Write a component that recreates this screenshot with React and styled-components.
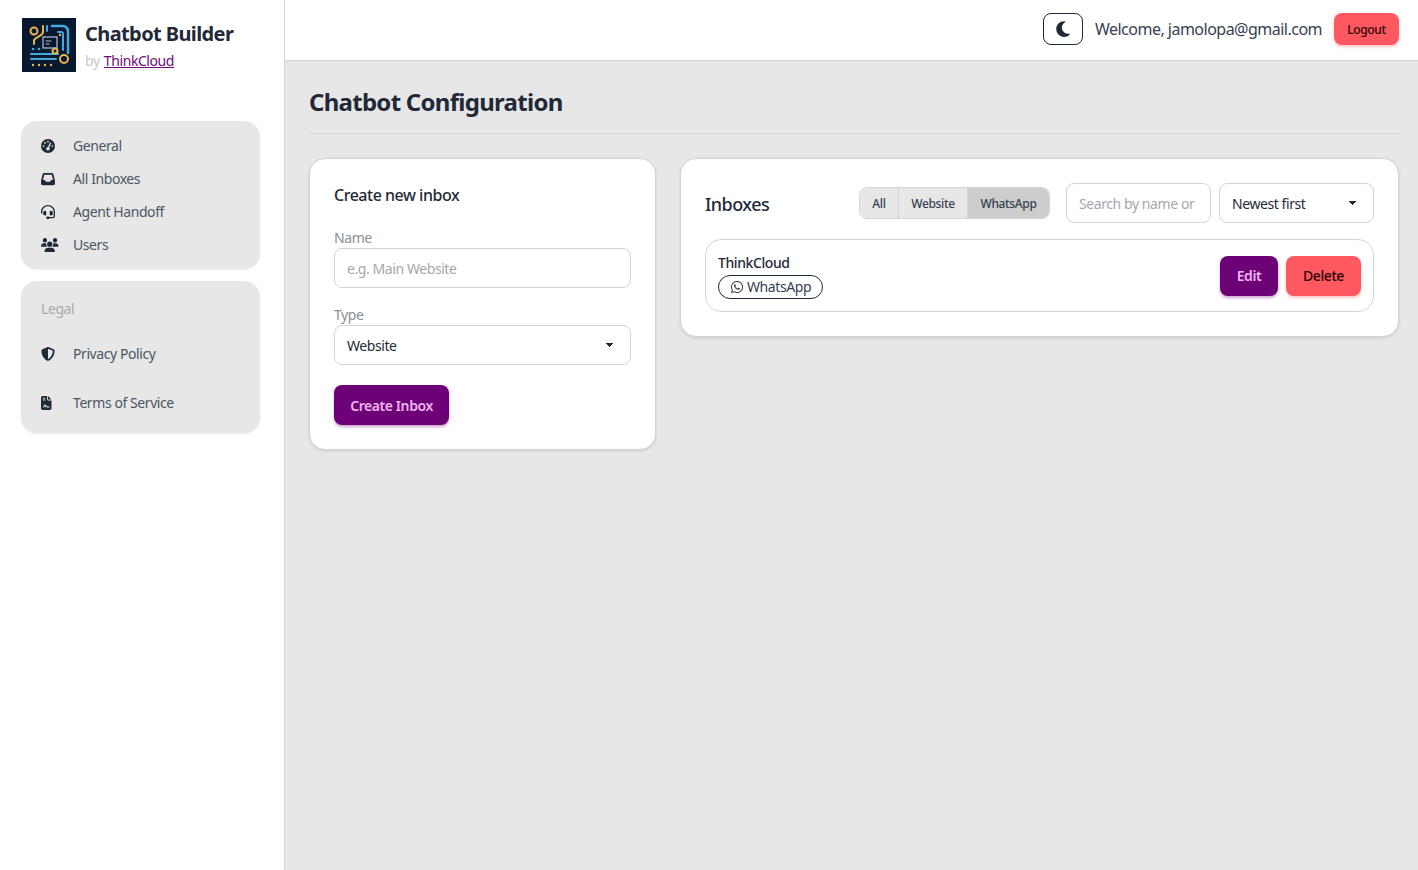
import React from "react";
import styled, { createGlobalStyle } from "styled-components";
import {
  FaGaugeHigh,
  FaInbox,
  FaHeadset,
  FaUsers,
  FaShieldHalved,
  FaFileContract,
  FaMoon,
  FaWhatsapp,
} from "react-icons/fa6";

const GlobalStyle = createGlobalStyle`
  * { box-sizing: border-box; letter-spacing: -0.03em; }
  html, body { margin: 0; height: 100%; }
  body {
    font-family: "Noto Sans", "Open Sans", sans-serif;
    color: #1f2937;
    background: #fff;
  }
`;

const Page = styled.div`
  display: flex;
  height: 870px;
  overflow: hidden;
`;

const Sidebar = styled.aside`
  width: 285px;
  flex: none;
  background: #fff;
  border-right: 1px solid #d4d4d4;
  padding: 18px 24px 0 21px;
`;

const Brand = styled.div`
  display: flex;
  gap: 9px;
  margin-bottom: 49px;
  margin-left: 1px;
`;

const BrandText = styled.div`
  display: flex;
  flex-direction: column;
`;

const BrandName = styled.div`
  font-size: 20px;
  font-weight: 700;
  line-height: 32px;
  color: #1f2937;
`;

const BrandBy = styled.div`
  font-size: 14px;
  line-height: 22px;
  color: #c9c9c9;
`;

const BrandLink = styled.a`
  color: #6f0a78;
  text-decoration: underline;
  margin-left: 1px;
`;

const NavPanel = styled.nav`
  background: #e7e7e7;
  border-radius: 16px;
  padding: ${(props) => props.$padding};
  margin-bottom: 12px;
  box-shadow: 0 1px 2px rgba(0, 0, 0, 0.08);
`;

const NavHeading = styled.div`
  font-size: 14px;
  line-height: 20px;
  color: #a9a9a9;
  margin-bottom: 10px;
  padding-left: 20px;
`;

const NavItem = styled.a`
  display: flex;
  align-items: center;
  height: ${(props) => props.$height}px;
  padding-left: 20px;
  font-size: 14px;
  color: #4b5563;
`;

const NavIcon = styled.span`
  display: flex;
  width: 32px;
  color: #1f2937;
  svg {
    width: ${(props) => props.$iconWidth}px;
    height: 14px;
  }
`;

const Content = styled.div`
  flex: 1;
  display: flex;
  flex-direction: column;
  min-width: 0;
`;

const Topbar = styled.header`
  height: 61px;
  flex: none;
  background: #fff;
  border-bottom: 1px solid #d4d4d4;
  display: flex;
  align-items: center;
  justify-content: flex-end;
  padding: 0 19px 2px 0;
`;

const ThemeButton = styled.button`
  width: 40px;
  height: 32px;
  border: 1px solid #1f2937;
  border-radius: 8px;
  background: #fff;
  color: #1f2937;
  font-size: 18px;
  display: flex;
  align-items: center;
  justify-content: center;
  padding: 0;
  margin-right: 12px;
`;

const Welcome = styled.span`
  font-size: 16px;
  letter-spacing: -0.032em;
  color: #374151;
  margin-right: 12px;
`;

const RedButton = styled.button`
  border: none;
  background: #ff5861;
  color: #2b0507;
  font-family: inherit;
  font-weight: 500;
  font-size: ${(props) => (props.$small ? "12px" : "14px")};
  height: ${(props) => (props.$small ? "32px" : "40px")};
  width: ${(props) => (props.$small ? "65px" : "75px")};
  padding: 0;
  border-radius: 8px;
  box-shadow: 0 2px 3px rgba(255, 88, 97, 0.35);
`;

const PurpleButton = styled.button`
  border: none;
  background: #6d0076;
  color: #f0b6f0;
  font-family: inherit;
  font-weight: 600;
  font-size: 14px;
  height: 40px;
  width: ${(props) => props.$width}px;
  padding: 0;
  border-radius: 8px;
  box-shadow: 0 2px 3px rgba(109, 0, 118, 0.35);
`;

const Main = styled.main`
  flex: 1;
  background: #e7e7e7;
  padding: 21px 18px 0 24px;
`;

const PageTitle = styled.h1`
  margin: 0;
  font-size: 24px;
  font-weight: 700;
  line-height: 40px;
  color: #1f2937;
  padding-bottom: 11px;
  border-bottom: 1px solid #d4d4d4;
  margin-bottom: 24px;
`;

const Columns = styled.div`
  display: grid;
  grid-template-columns: 347px 719px;
  gap: 24px;
  align-items: start;
`;

const Card = styled.section`
  background: #fff;
  border: 1px solid #d4d4d4;
  border-radius: 16px;
  padding: 24px;
  box-shadow: 0 1px 3px rgba(0, 0, 0, 0.12);
`;

const CardTitle = styled.h2`
  margin: 0 0 20px;
  font-size: 16px;
  font-weight: 500;
  line-height: 25px;
  color: #1f2937;
`;

const FieldLabel = styled.label`
  display: block;
  font-size: 14px;
  line-height: 20px;
  color: #8b8f96;
`;

const Input = styled.input`
  display: block;
  width: ${(props) => props.$width || "100%"};
  flex: none;
  height: 40px;
  border: 1px solid #d4d4d4;
  border-radius: 8px;
  background: #fff;
  padding: 0 12px;
  font-family: inherit;
  font-size: 14px;
  color: #1f2937;
  outline: none;
  &::placeholder {
    color: #a3a7ad;
    opacity: 1;
  }
`;

const Select = styled.select`
  display: block;
  appearance: none;
  width: ${(props) => props.$width || "100%"};
  flex: none;
  height: 40px;
  border: 1px solid #d4d4d4;
  border-radius: 8px;
  padding: 0 12px;
  font-family: inherit;
  font-size: 14px;
  color: #1f2937;
  outline: none;
  background-color: #fff;
  background-image: linear-gradient(45deg, transparent 50%, #1f2937 50%),
    linear-gradient(135deg, #1f2937 50%, transparent 50%);
  background-size: 4px 4px;
  background-repeat: no-repeat;
  background-position: calc(100% - 20px) 17px, calc(100% - 16px) 17px;
`;

const Field = styled.div`
  margin-bottom: ${(props) => props.$gap}px;
`;

const InboxHeader = styled.div`
  display: flex;
  align-items: center;
  margin-bottom: 16px;
`;

const InboxTitle = styled.h2`
  margin: 2px 0 0;
  flex: 1;
  font-size: 18px;
  font-weight: 500;
  color: #1f2937;
`;

const Filters = styled.div`
  display: flex;
  height: 32px;
  margin-right: 16px;
  border: 1px solid #d4d4d4;
  border-radius: 8px;
  overflow: hidden;
`;

const FilterTab = styled.button`
  border: none;
  border-left: ${(props) => (props.$first ? "none" : "1px solid #d4d4d4")};
  background: ${(props) => (props.$active ? "#cdcdcd" : "#e7e7e7")};
  color: #374151;
  font-family: inherit;
  font-size: 12px;
  font-weight: 500;
  width: ${(props) => props.$width}px;
  padding: 0;
`;

const SearchGroup = styled.div`
  display: flex;
  gap: 8px;
`;

const InboxRow = styled.div`
  display: flex;
  align-items: center;
  justify-content: space-between;
  border: 1px solid #d4d4d4;
  border-radius: 16px;
  padding: 12px;
  height: 73px;
`;

const InboxInfo = styled.div`
  display: flex;
  flex-direction: column;
  align-items: flex-start;
`;

const InboxName = styled.div`
  font-size: 14px;
  font-weight: 500;
  line-height: 20px;
  margin-bottom: 2px;
  color: #1f2937;
`;

const TypeBadge = styled.span`
  display: inline-flex;
  align-items: center;
  gap: 3px;
  height: 24px;
  padding: 0 11px;
  border: 1px solid #1f2937;
  border-radius: 12px;
  font-size: 14px;
  color: #374151;
`;

const RowActions = styled.div`
  display: flex;
  gap: 8px;
`;

const Logo = () => (
  <svg width="54" height="54" viewBox="0 0 54 54" style={{ flex: "none" }}>
    <rect width="54" height="54" fill="#07182f" />
    <g fill="none" strokeWidth="2" strokeLinecap="round">
      <circle cx="12" cy="13" r="3.5" stroke="#e8b64a" />
      <path d="M21 8v6c0 4-6 4-9 8v4" stroke="#e8b64a" />
      <path d="M25 8v5" stroke="#3fa9e0" />
      <path d="M30 8h10q6 0 6 6v21" stroke="#3fa9e0" strokeWidth="2.5" />
      <path d="M36 14h3q2 0 2 2v16" stroke="#3fa9e0" />
      <path d="M9 36h27M9 41h25" stroke="#3fa9e0" strokeWidth="2" />
      <rect x="21" y="19" width="14" height="11" stroke="#b9c4d0" strokeWidth="1.2" />
      <path d="M24 23h5M24 26h3" stroke="#b9c4d0" strokeWidth="1" />
      <circle cx="33" cy="33" r="2.5" stroke="#e8b64a" />
      <circle cx="42" cy="41" r="4" stroke="#e8b64a" />
    </g>
    <g fill="#e8b64a">
      <circle cx="11" cy="47" r="1.2" />
      <circle cx="17" cy="47" r="1.2" />
      <circle cx="23" cy="47" r="1.2" />
      <circle cx="29" cy="47" r="1.2" />
      <circle cx="38" cy="17" r="1.2" />
    </g>
    <g fill="#3fa9e0">
      <circle cx="11" cy="31" r="1.3" />
      <circle cx="17" cy="31" r="1.3" />
    </g>
  </svg>
);

const mainLinks = [
  { label: "General", icon: <FaGaugeHigh />, iconWidth: 14 },
  { label: "All Inboxes", icon: <FaInbox />, iconWidth: 14 },
  { label: "Agent Handoff", icon: <FaHeadset />, iconWidth: 14 },
  { label: "Users", icon: <FaUsers />, iconWidth: 17.5 },
];

const legalLinks = [
  { label: "Privacy Policy", icon: <FaShieldHalved />, iconWidth: 14 },
  { label: "Terms of Service", icon: <FaFileContract />, iconWidth: 10.5 },
];

const App = () => {
  return (
    <Page>
      <GlobalStyle />
      <Sidebar>
        <Brand>
          <Logo />
          <BrandText>
            <BrandName>Chatbot Builder</BrandName>
            <BrandBy>
              by <BrandLink href="#">ThinkCloud</BrandLink>
            </BrandBy>
          </BrandText>
        </Brand>
        <NavPanel $padding="8px 0">
          {mainLinks.map((link) => (
            <NavItem key={link.label} $height={33}>
              <NavIcon $iconWidth={link.iconWidth}>{link.icon}</NavIcon>
              {link.label}
            </NavItem>
          ))}
        </NavPanel>
        <NavPanel $padding="18px 0 6px">
          <NavHeading>Legal</NavHeading>
          {legalLinks.map((link) => (
            <NavItem key={link.label} $height={49}>
              <NavIcon $iconWidth={link.iconWidth}>{link.icon}</NavIcon>
              {link.label}
            </NavItem>
          ))}
        </NavPanel>
      </Sidebar>
      <Content>
        <Topbar>
          <ThemeButton>
            <FaMoon />
          </ThemeButton>
          <Welcome>Welcome, jamolopa@gmail.com</Welcome>
          <RedButton $small>Logout</RedButton>
        </Topbar>
        <Main>
          <PageTitle>Chatbot Configuration</PageTitle>
          <Columns>
            <Card>
              <CardTitle>Create new inbox</CardTitle>
              <Field $gap={17}>
                <FieldLabel>Name</FieldLabel>
                <Input placeholder="e.g. Main Website" />
              </Field>
              <Field $gap={20}>
                <FieldLabel>Type</FieldLabel>
                <Select defaultValue="Website">
                  <option>Website</option>
                  <option>WhatsApp</option>
                </Select>
              </Field>
              <PurpleButton $width={115}>Create Inbox</PurpleButton>
            </Card>
            <Card>
              <InboxHeader>
                <InboxTitle>Inboxes</InboxTitle>
                <Filters>
                  <FilterTab $first $width={38}>All</FilterTab>
                  <FilterTab $width={69}>Website</FilterTab>
                  <FilterTab $active $width={82}>WhatsApp</FilterTab>
                </Filters>
                <SearchGroup>
                  <Input $width="145px" placeholder="Search by name or" />
                  <Select $width="155px" defaultValue="Newest first">
                    <option>Newest first</option>
                    <option>Oldest first</option>
                  </Select>
                </SearchGroup>
              </InboxHeader>
              <InboxRow>
                <InboxInfo>
                  <InboxName>ThinkCloud</InboxName>
                  <TypeBadge>
                    <FaWhatsapp />
                    WhatsApp
                  </TypeBadge>
                </InboxInfo>
                <RowActions>
                  <PurpleButton $width={58}>Edit</PurpleButton>
                  <RedButton>Delete</RedButton>
                </RowActions>
              </InboxRow>
            </Card>
          </Columns>
        </Main>
      </Content>
    </Page>
  );
};

export default App;
